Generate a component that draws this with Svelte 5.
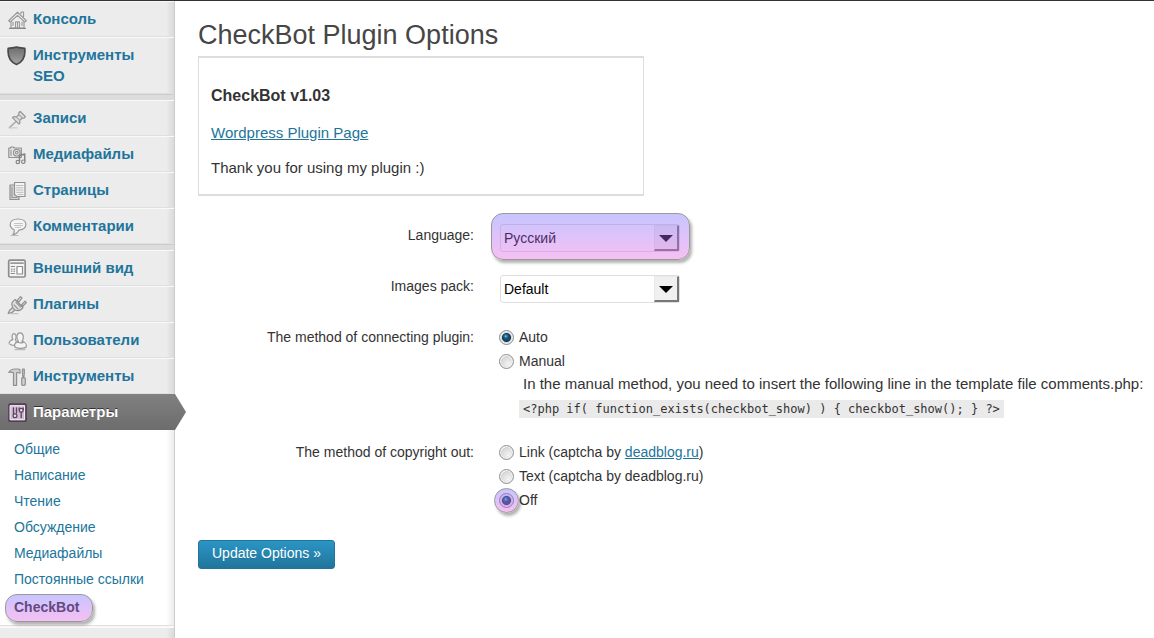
<script>
  const groups = [
    [
      { label: 'Консоль', icon: 'home' },
      { label: 'Инструменты SEO', icon: 'shield' }
    ],
    [
      { label: 'Записи', icon: 'pin' },
      { label: 'Медиафайлы', icon: 'media' },
      { label: 'Страницы', icon: 'pages' },
      { label: 'Комментарии', icon: 'comment' }
    ],
    [
      { label: 'Внешний вид', icon: 'layout' },
      { label: 'Плагины', icon: 'plug' },
      { label: 'Пользователи', icon: 'users' },
      { label: 'Инструменты', icon: 'tools' },
      { label: 'Параметры', icon: 'sliders', current: true }
    ]
  ];
  const submenu = ['Общие', 'Написание', 'Чтение', 'Обсуждение', 'Медиафайлы', 'Постоянные ссылки'];

  let language = $state('ru');
  let pack = $state('default');
  let method = $state('auto');
  let copyright = $state('off');
</script>

{#snippet icon(name)}
  <svg class="icon" viewBox="0 0 20 20" width="20" height="20" aria-hidden="true" fill="#f4f4f4" stroke="#999" stroke-width="1.2" stroke-linejoin="round" stroke-linecap="round">
    {#if name === 'home'}
      <path d="M4 10.500v7.500h13V10.500" />
      <path d="M14 3.500v-1.500h2.500v4.500" />
      <path d="M1.700 10.700 10.500 2.200l8.800 8.500-1.600 1.300-7.200-6.600L3.300 12z" />
      <path d="M8.500 18v-6.200h4v6.200M10.500 11.800v6M6 12v3.500M15 12v3.500" fill="none" />
      <path d="M2.500 18.300h16" stroke="#888" />
    {:else if name === 'shield'}
      <defs>
        <linearGradient id="steel" x1="0" y1="0" x2="0" y2="1">
          <stop offset="0" stop-color="#6c6c6c" /><stop offset="1" stop-color="#a4a4a4" />
        </linearGradient>
      </defs>
      <path d="M9.500 1C7 1.900 4 2 1.200 2.300.6 8.500 2 15.500 9.500 18.500 17 15.500 18.400 8.500 17.800 2.300 15.500 2 12 1.900 9.500 1z" fill="url(#steel)" stroke="#4a4a4a" stroke-width="1.700" />
    {:else if name === 'pin'}
      <path d="m9 12.500-6.500 6" stroke="#aaa" stroke-width="1.700" />
      <path d="M3 18.800h7" stroke="#ccc" />
      <path d="m5.500 8.700 6.500 6.500c1.200-1.200 1.200-2.300.6-3.700l2.700-2.500 1.700.2 1.500-1.500-5.300-5.200-1.500 1.500.3 1.500-2.700 2.700C8 7.500 6.700 7.500 5.500 8.700z" fill="#e2e2e2" stroke="#959595" />
      <path d="m9.300 8 3.300 3.300M11.700 5.500l3.500 3.300" fill="none" stroke="#aaa" />
    {:else if name === 'media'}
      <path d="M1.800 3h2V2h3v1h7.500v9.500H1.800z" fill="#e8e8e8" stroke="#909090" />
      <circle cx="9.800" cy="7.700" r="3.300" stroke="#909090" /><circle cx="9.800" cy="7.700" r="1.300" stroke="#909090" />
      <path d="M4 5v5.500" />
      <path d="M12.500 16.500V10.500l5.200-1.500v7" fill="none" stroke="#848484" stroke-width="1.500" />
      <circle cx="10.800" cy="17" r="1.700" stroke="#848484" /><circle cx="16.300" cy="16.700" r="1.700" stroke="#848484" />
    {:else if name === 'pages'}
      <path d="M3 4h9v14.500H3z" fill="#d4d4d4" stroke="#909090" />
      <path d="M7.500 1.500h10.500v14h-8l-2.500-2z" stroke="#909090" />
      <path d="M9.500 4.500h6.500M9.500 6.800h6.500M9.500 9h6.500M9.500 11.300h6.500M11 13.500h5" stroke="#bbb" stroke-width="1" />
      <path d="M5 6v10.500h5" fill="none" />
    {:else if name === 'comment'}
      <path d="M11 2c4.700 0 7.900 2.300 7.900 5.500s-3 5.600-7 5.600c-1.200 2.500-2.700 4.200-6 4.800 1.300-1.600 1.600-3.500 1.300-5.200-2.500-.9-4-2.900-4-5.200C3.200 4.200 6.300 2 11 2z" />
      <path d="M7.500 6.500h8M7.500 8.500h8M8.500 10.400h5" stroke="#c4c4c4" stroke-width="1" />
      <path d="M4 18.500h7" stroke="#bbb" />
    {:else if name === 'layout'}
      <rect x="1.700" y="1.200" width="16.500" height="16.800" rx="1.500" stroke-width="1.700" stroke="#8c8c8c" />
      <path d="M4 4.200h12" stroke-width="1.700" />
      <path d="M10 7.500h5.500v7.500h-5.500z" fill="#fff" stroke="#8c8c8c" />
      <path d="M4.200 7.500h3.300M4.500 10.200h.5M7 10.200h.5M4.500 12.200h.5M7 12.200h.5M4.200 14.500h3.300" stroke="#8c8c8c" />
    {:else if name === 'plug'}
      <path d="m10 6 3.500-4.300 1.500 1.200-3 4zM14.500 10l3.500-3.800 1.300 1.300-3.800 4z" stroke="#909090" />
      <path d="M8.200 4.500c-3 2-4.200 5-2.500 8L2.500 15.500l-1.300 3 3.500-.8 3.300-2.700c3.200 1.300 6.200.3 8-2.500z" fill="#e2e2e2" stroke="#8c8c8c" />
      <path d="m9 7.500 4.500 4.500M7 10l4 4M5.500 12.500l2.300 2.500" fill="none" />
      <path d="M3 18.700h8" stroke="#c4c4c4" />
    {:else if name === 'users'}
      <path d="M6 8.700c-1.600-2.500-1.100-6 1-6 2.200 0 2.700 3.500 1.400 6 1 1.200 1.300 4-.2 5-1.700 1.100-5.300.5-6-1.300-.5-1.500 1.500-3.400 3.800-3.700z" />
      <path d="M11.500 10.400c-2.600-3.200-2.100-8.500 1.500-8.500s4.200 5.200 2 8.500c2.700.6 4.800 2.700 4.300 5.100-.6 2.300-10.600 2.500-11.600.1-.8-2.100 1.200-4.500 3.800-5.200z" />
      <path d="M10.500 11c2 1.200 4.500 1 6-.1" fill="none" />
      <path d="M8 18.600h10" stroke="#bbb" />
    {:else if name === 'tools'}
      <path d="M1.800 5.500C3.300 2.500 5.300 2 8.300 2h3.200l1.500.8v3.500l-2-.8H9.600v12.800H6.500V5.800C4.800 5 3.100 5 1.800 5.500z" fill="#d0d0d0" stroke="#909090" />
      <path d="M15.500 2h1.800v4.500l-.5 4.500h1.500v6.500l-.8.800H15.500l-.8-.8V11h1.300l-.5-4.500z" fill="#d0d0d0" stroke="#909090" />
    {:else}
      <rect x="2" y="1.200" width="17" height="17" rx="1" fill="#cdbcd0" stroke="#543e56" stroke-width="1.700" />
      <path d="M3.500 2.800h14v13.900h-14z" fill="none" stroke="#f1e8f2" stroke-width="1" />
      <path d="M6.500 5v6.500M9.500 10V5M14.200 9.500v5M12.200 4.800v2M16.200 4.800v2" fill="none" stroke="#5d4261" stroke-width="1.300" />
      <circle cx="8" cy="12.800" r="1.900" fill="#e9ddeb" stroke="#5d4261" /><circle cx="14.200" cy="7.200" r="1.900" fill="#e9ddeb" stroke="#5d4261" />
    {/if}
  </svg>
{/snippet}

<div class="page">
  <nav class="sidebar">
    {#each groups as group}
      <ul class="menu">
        {#each group as item}
          <li>
            <a class="item" class:current={item.current} href="#top">
              {@render icon(item.icon)}
              <span class:narrow={item.icon === 'shield'}>{item.label}</span>
            </a>
          </li>
        {/each}
      </ul>
    {/each}
    <ul class="submenu">
      {#each submenu as label}
        <li><a href="#top">{label}</a></li>
      {/each}
      <li class="active"><a class="tinted" href="#top">CheckBot</a></li>
    </ul>
  </nav>

  <main>
    <h1>CheckBot Plugin Options</h1>

    <section class="about">
      <h2>CheckBot v1.03</h2>
      <p><a href="#top">Wordpress Plugin Page</a></p>
      <p>Thank you for using my plugin :)</p>
    </section>

    <form onsubmit={(e) => e.preventDefault()}>
      <div class="row">
        <label class="name" for="language">Language:</label>
        <div class="select tinted">
          <select id="language" bind:value={language}>
            <option value="ru">Русский</option>
            <option value="en">English</option>
          </select>
          <span class="arrow"></span>
        </div>
      </div>

      <div class="row">
        <label class="name" for="pack">Images pack:</label>
        <div class="select">
          <select id="pack" bind:value={pack}>
            <option value="default">Default</option>
          </select>
          <span class="arrow"></span>
        </div>
      </div>

      <div class="row" role="radiogroup" aria-labelledby="method-name">
        <span class="name" id="method-name">The method of connecting plugin:</span>
        <div class="choices">
          <div class="choice">
            <span class="dot"><input id="auto" type="radio" value="auto" bind:group={method} /></span>
            <label for="auto">Auto</label>
          </div>
          <div class="choice">
            <span class="dot"><input id="manual" type="radio" value="manual" bind:group={method} /></span>
            <label for="manual">Manual</label>
          </div>
          <div class="note">
            <p>In the manual method, you need to insert the following line in the template file comments.php:</p>
            <code>{'<?php if( function_exists(checkbot_show) ) { checkbot_show(); } ?>'}</code>
          </div>
        </div>
      </div>

      <div class="row" role="radiogroup" aria-labelledby="copyright-name">
        <span class="name" id="copyright-name">The method of copyright out:</span>
        <div class="choices">
          <div class="choice">
            <span class="dot"><input id="link" type="radio" value="link" bind:group={copyright} /></span>
            <label for="link">Link (captcha by <a href="#top">deadblog.ru</a>)</label>
          </div>
          <div class="choice">
            <span class="dot"><input id="text" type="radio" value="text" bind:group={copyright} /></span>
            <label for="text">Text (captcha by deadblog.ru)</label>
          </div>
          <div class="choice">
            <span class="dot tinted"><input id="off" type="radio" value="off" bind:group={copyright} /></span>
            <label for="off">Off</label>
          </div>
        </div>
      </div>

      <button type="submit">Update Options »</button>
    </form>
  </main>
</div>

<style>
  :global(body) {
    background: #fff;
    color: #333;
    font: 14px/22px "Liberation Sans", Arial, sans-serif;
  }
  h1, h2, p, ul { margin: 0; padding: 0; }
  ul { list-style: none; }
  a { color: #21759b; }

  .page {
    display: flex;
    min-height: 100vh;
    box-sizing: border-box;
    border-top: 1px solid #333;
  }

  .sidebar {
    flex: 0 0 174px;
    background: linear-gradient(to right, transparent 166px, rgba(0, 0, 0, 0.08)) #ececec;
    border-right: 1px solid #ccc;
  }
  .menu + .menu {
    border-top: 5px solid #dcdcdc;
    box-shadow: 0 -1px #ccc;
    margin-top: 1px;
  }
  .item {
    display: flex;
    gap: 6px;
    position: relative;
    padding: 7px 10px 6px 7px;
    border-top: 1px solid #f9f9f9;
    border-bottom: 1px solid #dfdfdf;
    font-size: 15px;
    line-height: 21px;
    font-weight: bold;
    text-decoration: none;
  }
  .item span { margin-top: -1px; margin-bottom: 1px; }
  .narrow { max-width: 110px; }
  .icon { flex: none; margin-top: 1px; }
  .current {
    color: #fff;
    background: linear-gradient(#808080, #6d6d6d);
    border-color: #808080 transparent #6d6d6d;
    text-shadow: 0 -1px #333;
  }
  .current::after {
    content: "";
    position: absolute;
    left: 100%;
    top: -1px;
    bottom: -1px;
    width: 12px;
    background: linear-gradient(#808080, #6d6d6d);
    clip-path: polygon(0 0, 1px 0, 100% 50%, 1px 100%, 0 100%);
  }
  .submenu {
    padding: 6px 14px 3px;
    background: linear-gradient(to right, transparent 166px, rgba(0, 0, 0, 0.08)) #fff;
    border-bottom: 1px solid #dfdfdf;
    box-shadow: 0 2px #f9f9f9;
    line-height: 26px;
  }
  .submenu a { text-decoration: none; white-space: nowrap; }
  .active { margin: 2px 0 0 -9px; }
  .submenu .active a {
    display: inline-block;
    box-sizing: border-box;
    height: 28px;
    padding: 0 14px 0 9px;
    color: #333;
    font-weight: bold;
    border-radius: 12px;
    vertical-align: top;
  }

  .tinted { position: relative; }
  .tinted::after {
    content: "";
    position: absolute;
    inset: 0;
    box-sizing: border-box;
    border: 1px solid #999;
    border-radius: 12px;
    background: linear-gradient(rgba(115, 110, 255, 0.4), rgba(232, 97, 225, 0.4));
    box-shadow: 2px 3px 3px rgba(0, 0, 0, 0.3);
    pointer-events: none;
  }

  main { flex: 1; min-width: 0; padding: 16px 0 0 23px; }
  h1 {
    color: #464646;
    font-size: 27px;
    line-height: 36px;
    font-weight: normal;
  }
  .about {
    max-width: 420px;
    margin-top: 3px;
    padding: 26px 12px 16px;
    border: solid #ddd;
    border-width: 2px 1px;
  }
  h2 { font-size: 16px; line-height: 24px; }
  .about p { margin-top: 14px; line-height: 21px; }

  form { display: flex; flex-direction: column; gap: 23px; margin-top: 28px; }
  .row { display: grid; grid-template-columns: 276px 1fr; column-gap: 25px; }
  .name { text-align: right; }

  .select { position: relative; width: 180px; height: 28px; margin-left: 1px; }
  select {
    appearance: none;
    width: 100%;
    height: 100%;
    padding: 0 28px 0 3px;
    border: 1px solid #dfdfdf;
    border-radius: 3px;
    background: #fff;
    color: #000;
    font: inherit;
  }
  .arrow {
    position: absolute;
    top: 1px;
    right: 1px;
    bottom: 1px;
    width: 25px;
    box-sizing: border-box;
    border: solid;
    border-width: 1px 2px 2px 1px;
    border-color: #e8e8e8 #777 #777 #e8e8e8;
    background: #f0f0f0;
    pointer-events: none;
  }
  .arrow::after {
    content: "";
    position: absolute;
    left: 4px;
    top: 9px;
    border: solid transparent;
    border-width: 7px 7px 0;
    border-top-color: #000;
  }
  .select.tinted::after { inset: -11px -10px -8px -9px; }

  .choices { display: flex; flex-direction: column; gap: 2px; }
  .choice { display: flex; align-items: center; gap: 5px; }
  .dot { display: flex; }
  .dot input {
    appearance: none;
    width: 15px;
    height: 15px;
    margin: 0;
    border: 1px solid #8e8f8f;
    border-radius: 50%;
    background: radial-gradient(circle at 65% 70%, #f4f4f4, #d8d8d8 60%, #c8cdd2 64%, #fff 72%);
    box-shadow: inset 0 0 0 1px #f4f4f4;
  }
  .dot input:checked {
    background:
      radial-gradient(circle at 45% 40%, #b8e8f8 0, #2f83ac 1px, transparent 3px),
      radial-gradient(circle, #17496e 3px, #12304c 4px, transparent 5px),
      #d4d8dc;
  }
  .dot.tinted::after { inset: -5px; border-radius: 50%; }
  .note { padding-left: 20px; }
  .note p { padding-left: 4px; line-height: 20px; }
  code {
    display: inline-block;
    margin-top: 6px;
    padding: 0 4px;
    background: #eaeaea;
    font: 12px/18px "DejaVu Sans Mono", monospace;
    vertical-align: top;
  }

  .about p, .note p { font-size: 15px; }

  button {
    align-self: flex-start;
    height: 29px;
    margin-top: 6px;
    padding: 0 13px 4px;
    border: 1px solid #21759b;
    border-radius: 3px;
    background: linear-gradient(#2a95c5, #21759b);
    color: #fff;
    font: inherit;
    text-shadow: 0 1px rgba(0, 0, 0, 0.1);
  }
</style>
